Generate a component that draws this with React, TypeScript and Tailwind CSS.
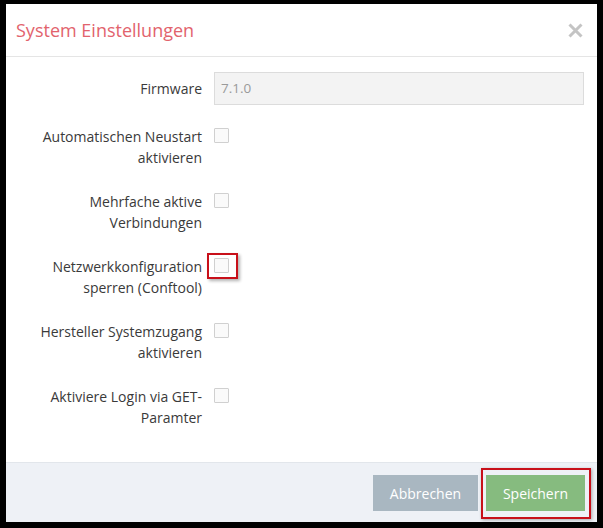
const rows: { lines: string[]; marked?: boolean }[] = [
  { lines: ["Automatischen Neustart", "aktivieren"] },
  { lines: ["Mehrfache aktive", "Verbindungen"] },
  { lines: ["Netzwerkkonfiguration", "sperren (Conftool)"], marked: true },
  { lines: ["Hersteller Systemzugang", "aktivieren"] },
  { lines: ["Aktiviere Login via GET-", "Paramter"] },
];

const CloseIcon = () => (
  <svg width="15" height="15" viewBox="0 0 15 15" className="block">
    <path d="M1.5 1.5 L13.5 13.5 M13.5 1.5 L1.5 13.5" stroke="#c4c4c4" strokeWidth="3" />
  </svg>
);

const Checkbox = ({ marked }: { marked?: boolean }) => (
  <div className="relative mt-[2px] h-[15px] w-[15px]">
    <div className="h-[15px] w-[15px] rounded-[1px] border border-[#d0d0d0] bg-[#fafafa]" />
    {marked && (
      <div className="absolute -left-[7px] -top-[5px] h-[26px] w-[31px] border-2 border-[#c8101a] shadow-[2px_2px_3px_rgba(0,0,0,0.3)]" />
    )}
  </div>
);

export default function App() {
  return (
    <div
      className="min-h-[528px] w-[603px] bg-black pl-[6px] pt-[4px]"
      style={{ fontFamily: '"Open Sans", "Liberation Sans", sans-serif' }}
    >
      <div className="flex h-[518px] w-[591px] flex-col bg-white">
        <div className="flex h-[53px] items-center justify-between border-b border-[#e5e5e5] pl-[10px] pr-[14px]">
          <h4 className="text-[18px] leading-none text-[#e2636d]">System Einstellungen</h4>
          <CloseIcon />
        </div>

        <div className="flex flex-1 flex-col pt-[15px] text-[14px] text-[#3a3a3a]">
          <div className="flex items-center">
            <label className="ml-[30px] w-[166px] text-right">Firmware</label>
            <div className="ml-[12px] flex h-[33px] w-[370px] items-center border border-[#dcdcdc] bg-[#f3f3f3] pl-[6px] text-[13.5px] text-[#9a9a9a]">
              7.1.0
            </div>
          </div>

          <div className="mt-[21px] flex flex-col gap-[23px]">
            {rows.map((row) => (
              <div key={row.lines[0]} className="flex items-start">
                <label className="ml-[30px] w-[166px] whitespace-nowrap text-right leading-[21px]">
                  {row.lines[0]}
                  <br />
                  {row.lines[1]}
                </label>
                <div className="ml-[12px]">
                  <Checkbox marked={row.marked} />
                </div>
              </div>
            ))}
          </div>
        </div>

        <div className="flex h-[60px] items-start justify-end gap-[8px] border-t border-[#e2e6eb] bg-[#eef1f6] pr-[12px] pt-[12px]">
          <button className="h-[36px] w-[105px] bg-[#a9b7c1] text-[14px] text-white">Abbrechen</button>
          <div className="relative">
            <button className="h-[36px] w-[99px] bg-[#86bb7f] text-[14px] text-white">Speichern</button>
            <div className="absolute -bottom-[8px] -left-[5px] -right-[6px] -top-[7px] border-[2.5px] border-[#c8101a] shadow-[1px_1px_3px_rgba(0,0,0,0.3)]" />
          </div>
        </div>
      </div>
    </div>
  );
}
